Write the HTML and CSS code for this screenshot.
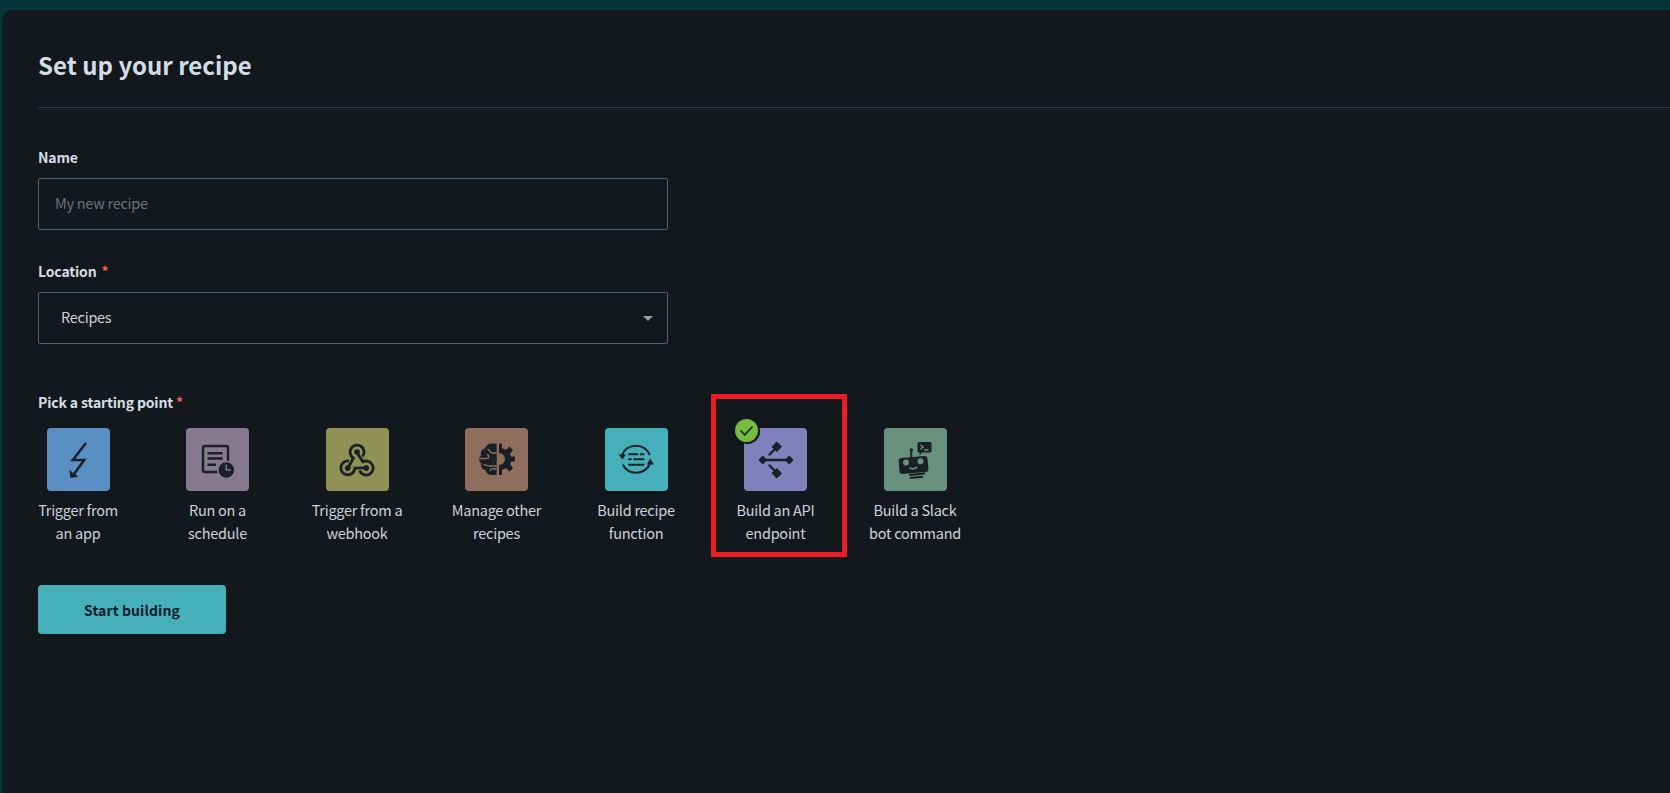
FILE: index.html
```html
<!DOCTYPE html>
<html lang="en">
<head>
<meta charset="utf-8">
<title>Set up your recipe</title>
<link rel="stylesheet" href="styles.css">
</head>
<body>
<main class="card">
  <header class="head"><h1 class="title">Set up your recipe</h1></header>
  <form class="form">
    <div class="field">
      <label class="label">Name</label>
      <div class="box placeholder">My new recipe</div>
    </div>
    <div class="field">
      <label class="label">Location <span class="req req-gap">*</span></label>
      <div class="box select"><span>Recipes</span><span class="caret"></span></div>
    </div>
    <div class="picker">
      <div class="label">Pick a starting point <span class="req">*</span></div>
      <div class="tiles">
        <div class="tile">
          <div class="ico c-blue"><svg viewBox="0 0 63 63"><path class="st" d="M39 15 25.8 32H37.3L26 47.5"/><path class="fl" d="M22.3 42 31.5 48.8 23.6 50Z"/></svg></div>
          <p class="cap">Trigger from<br>an app</p>
        </div>
        <div class="tile">
          <div class="ico c-mauve"><svg viewBox="0 0 63 63"><rect class="st" x="17" y="18" width="25" height="26" rx="2"/><path class="st" d="M21.5 25.3H36.7M21.5 30.6H36.7M21.5 36.7H30"/><circle class="fl hole-mauve" cx="40.3" cy="42" r="9.4"/><circle class="fl" cx="40.3" cy="42" r="7.8"/><path class="hand-mauve" d="M40.3 36.5V42H45"/></svg></div>
          <p class="cap">Run on a<br>schedule</p>
        </div>
        <div class="tile">
          <div class="ico c-olive"><svg viewBox="0 0 63 63"><g id="hook"><path class="st thick" d="M22 40 27.300 30A7 7 0 1 1 36.500 28.500"/><circle class="fl" cx="31" cy="24" r="2.800"/></g><use href="#hook" transform="rotate(120 31 34.670)"/><use href="#hook" transform="rotate(240 31 34.670)"/></svg></div>
          <p class="cap">Trigger from a<br>webhook</p>
        </div>
        <div class="tile">
          <div class="ico c-brown"><svg viewBox="0 0 63 63"><path class="fl" d="M31.700 15.500V47H27C23.500 47 21 44.800 20.500 42 17 41.500 15.300 38.500 16.500 35.500 13.600 33.800 13.400 29.400 16 27.500 15 24 17 21 20 20.500 21 17 24 15.500 27 15.500Z"/><path class="cut-brown" d="M31.700 25H27C25 25 25 21.500 22.500 21.500M14.500 30.500H22C24.500 30.500 24.500 27 22 26.500M31.700 38H24C22 38 20.500 36.500 18.500 36.500M25 43C25 40.500 27 40.500 31.700 41"/><path class="fl" d="M34 15.500H37V20L41 21.800 44.500 18.500 48 22 45 26 46.200 28.500H50V33.500H46.200L45 36 48 40 44.500 43.500 41 40.200 37 42V47H34V37A6 6 0 0 0 34 25Z"/></svg></div>
          <p class="cap">Manage other<br>recipes</p>
        </div>
        <div class="tile">
          <div class="ico c-teal"><svg viewBox="0 0 63 63"><path class="st thin" d="M17 27A15 15 0 0 1 44.800 27M45 35.500A15 15 0 0 1 17.800 36.500"/><path class="fl" d="M13.500 26.500 21 26.500 17.500 31.500ZM41.800 36.500 49 36.500 45 30.500Z"/><path class="st bar" d="M23.300 26.300H33.300M35 26.300H39.300M23.300 31.300H26.700M28.300 31.300H39.300M23.300 36.700H39.300"/></svg></div>
          <p class="cap">Build recipe<br>function</p>
        </div>
        <div class="tile selected">
          <div class="ico c-purple"><svg viewBox="0 0 63 63"><path class="st mid" d="M20 32H44M24.800 27.300 31 21M24.800 36.700 31 43"/><path class="fl" d="M18.700 27.600 23.100 32 18.700 36.400 14.300 32ZM45.300 27.600 49.700 32 45.300 36.400 40.900 32ZM32.500 13.500 38 18.500 33 24 27.500 19ZM33 40 38 45.500 32.500 50.500 27.500 45Z"/></svg></div>
          <span class="badge"><svg viewBox="0 0 23 23"><path class="tick" d="M5.500 11.500 9.800 15.800 17.500 7.500"/></svg></span>
          <p class="cap">Build an API<br>endpoint</p>
          <span class="highlight"></span>
        </div>
        <div class="tile">
          <div class="ico c-green"><svg viewBox="0 0 63 63"><path class="fl" d="M35 14H46A1.500 1.500 0 0 1 47.500 15.500V23A1.500 1.500 0 0 1 46 24.500H38L35.500 27.500V24.500H35A1.500 1.500 0 0 1 33.500 23V15.500A1.500 1.500 0 0 1 35 14Z"/><path class="cut-green" d="M36.500 16.800 39 19 36.500 21.200M40 22H44.500"/><circle class="fl" cx="27.300" cy="22" r="1.700"/><path class="st thin" d="M27.300 23V29"/><rect class="fl" x="15" y="29" width="29" height="16" rx="3" transform="rotate(-5 29.500 37)"/><circle class="hole-green" cx="22" cy="34.500" r="3"/><circle class="hole-green" cx="36.500" cy="33.300" r="3"/><path class="cut-green" d="M25.500 39.500C27.500 41.500 31 41.200 33 39"/><path class="st thin" d="M25 47 41 45.600M26 50 39 48.800"/></svg></div>
          <p class="cap">Build a Slack<br>bot command</p>
        </div>
      </div>
    </div>
    <button class="start" type="button">Start building</button>
  </form>
</main>
</body>
</html>
```
FILE: styles.css
```css
* { box-sizing: border-box; }
html, body { height: 100%; }
body {
  margin: 0;
  padding: 10px 0 0 2px;
  background: #05343b;
  font-family: "Noto Sans CJK SC", "Noto Sans", sans-serif;
  overflow: hidden;
}
.card {
  height: 783px;
  padding-left: 36px;
  background: #13181d;
  border-radius: 11px 0 0 0;
}
.head {
  height: 98px;
  display: flex;
  align-items: center;
  border-bottom: 1px solid #2f3b43;
  padding-top: 13px;
}
.title {
  margin: 0;
  font-size: 24px;
  line-height: 32px;
  font-weight: 700;
  color: #d3dde6;
}
.form { width: 950px; padding-top: 39px; }
.field { margin-bottom: 31px; }
.label {
  display: block;
  font-size: 14px;
  line-height: 20px;
  letter-spacing: -0.15px;
  font-weight: 700;
  color: #d3dde6;
  margin-bottom: 11px;
}
.box {
  width: 630px;
  height: 52px;
  display: flex;
  align-items: center;
  justify-content: space-between;
  border: 1px solid #4b6575;
  border-radius: 2px;
  padding-bottom: 4px;
  font-size: 14.500px;
  letter-spacing: -0.270px;
}
.placeholder { padding-left: 16px; padding-right: 16px; color: #66737d; }
.select { padding-left: 22px; padding-right: 14px; color: #c8d4de; }
.caret {
  width: 0;
  height: 0;
  margin-top: 4px;
  border-left: 5px solid transparent;
  border-right: 5px solid transparent;
  border-top: 5px solid #8c9ba6;
}
.req { color: #f0614d; font-weight: 700; }
.req-gap { margin-left: 2px; }
.picker { margin-top: 48px; }
.picker .label { margin-bottom: 16px; }
.tiles {
  display: grid;
  grid-template-columns: repeat(7, 99px);
  column-gap: 40.500px;
  margin-left: -9.500px;
}
.tile { position: relative; text-align: center; }
.ico {
  width: 63px;
  height: 63px;
  margin: 0 auto;
  border-radius: 4px;
}
.ico svg { display: block; width: 63px; height: 63px; }
.cap {
  margin: 7px 0 0;
  font-size: 14.500px;
  line-height: 23px;
  letter-spacing: -0.270px;
  color: #c8d4de;
  white-space: nowrap;
}
.c-blue { background: #5a8fc3; }
.c-mauve { background: #857a90; }
.c-olive { background: #8f9155; }
.c-brown { background: #8f6e5e; }
.c-teal { background: #45afba; }
.c-purple { background: #7f82ba; }
.c-green { background: #67917d; }
.st { fill: none; stroke: #1a2026; stroke-width: 2.500; }
.st.thick { stroke-width: 2.800; }
.st.thin { stroke-width: 2; }
.st.mid { stroke-width: 2.300; }
.st.bar { stroke-width: 2; }
.fl { fill: #1a2026; }
.fl.hole-mauve { fill: #857a90; }
.hand-mauve { fill: none; stroke: #857a90; stroke-width: 1.500; }
.cut-brown { fill: none; stroke: #8f6e5e; stroke-width: 1.300; }
.cut-green { fill: none; stroke: #67917d; stroke-width: 1.500; }
.hole-green { fill: #67917d; }
.badge {
  position: absolute;
  left: 9px;
  top: -9px;
  width: 23px;
  height: 23px;
  border-radius: 50%;
  background: #76bc3f;
  box-shadow: 1px 1px 0 1px #13181d;
}
.badge svg { display: block; width: 23px; height: 23px; }
.tick { fill: none; stroke: #1a2026; stroke-width: 1.500; }
.highlight {
  position: absolute;
  left: -15px;
  top: -34px;
  width: 136px;
  height: 163px;
  border: 5px solid #ed1c24;
}
.start {
  display: block;
  width: 188px;
  height: 49px;
  margin-top: 41px;
  padding: 0;
  border: 0;
  border-radius: 4px;
  background: #45afba;
  color: #10202a;
  font-family: inherit;
  font-size: 14px;
  letter-spacing: 0.100px;
  font-weight: 700;
}
```
